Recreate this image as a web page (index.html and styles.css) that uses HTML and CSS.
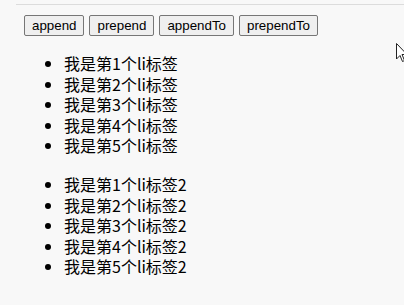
FILE: index.html
```html
<!DOCTYPE html>
<html>
<head>
<meta charset="utf-8">
<link rel="stylesheet" href="styles.css">
</head>
<body>
<div class="topline"></div>
<div class="page">
  <div class="buttons">
    <button class="btn">append</button>
    <button class="btn">prepend</button>
    <button class="btn">appendTo</button>
    <button class="btn">prependTo</button>
  </div>
  <ul class="list">
    <li>我是第1个li标签</li>
    <li>我是第2个li标签</li>
    <li>我是第3个li标签</li>
    <li>我是第4个li标签</li>
    <li>我是第5个li标签</li>
  </ul>
  <ul class="list">
    <li>我是第1个li标签2</li>
    <li>我是第2个li标签2</li>
    <li>我是第3个li标签2</li>
    <li>我是第4个li标签2</li>
    <li>我是第5个li标签2</li>
  </ul>
</div>
<svg class="cursor" width="12" height="20" viewBox="0 0 12 20">
  <path d="M0.5 0.5 L0.5 16 L4 12.5 L6.5 18.5 L8.5 17.5 L6 11.5 L11 11.5 Z" fill="#fff" stroke="#222" stroke-width="1"/>
</svg>
</body>
</html>
```
FILE: styles.css
```css
html, body {
  margin: 0;
  padding: 0;
  background: #f8f8f8;
  width: 404px;
  height: 305px;
  overflow: hidden;
  position: relative;
}
.topline {
  margin: 4px 0 0 16px;
  border-top: 1px solid #dcdcdc;
}
.page {
  padding: 10px 0 0 24px;
  font-family: "Noto Sans CJK SC", "Liberation Sans", sans-serif;
  color: #000;
}
.buttons {
  display: flex;
  gap: 5px;
}
.btn {
  font-family: "Liberation Sans", Arial, sans-serif;
  font-size: 13.33px;
  height: 21px;
  padding: 0 7px;
  border: 1px solid #767676;
  border-radius: 2px;
  background: #efefef;
  color: #000;
  line-height: 19px;
}
.list {
  margin: 17px 0 18px;
  padding-left: 40px;
  font-size: 16px;
  line-height: 20.6px;
}
.cursor {
  position: absolute;
  left: 396px;
  top: 43px;
}
```
